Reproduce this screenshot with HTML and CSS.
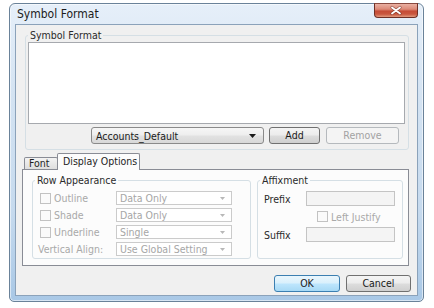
FILE: index.html
```html
<!DOCTYPE html>
<html>
<head>
<meta charset="utf-8">
<link rel="stylesheet" href="styles.css">
</head>
<body>
<div class="window">
  <div class="titlebar">
    <span class="title">Symbol Format</span>
    <div class="close">
      <svg width="42" height="13" viewBox="0 0 42 13">
        <path d="M17 3.5 L25 9.5 M25 3.5 L17 9.5" stroke="#5a2018" stroke-width="3.2" stroke-linecap="round" fill="none" opacity="0.55"/>
        <path d="M17 3.5 L25 9.5 M25 3.5 L17 9.5" stroke="#ffffff" stroke-width="1.8" stroke-linecap="round" fill="none"/>
      </svg>
    </div>
  </div>
  <div class="client">
    <fieldset class="group sym">
      <legend>Symbol Format</legend>
      <div class="listbox"></div>
      <div class="symrow">
        <div class="dropdown"><span>Accounts_Default</span><svg class="darrow" width="7" height="4" viewBox="0 0 7 4"><path d="M0 0 H7 L3.5 4 Z" fill="#1a1a1a"/></svg></div>
        <div class="btn add">Add</div>
        <div class="btn remove">Remove</div>
      </div>
    </fieldset>
    <div class="tabs">
      <div class="tab">Font</div>
      <div class="tab active">Display Options</div>
    </div>
    <div class="panel">
      <fieldset class="group rowapp">
        <legend>Row Appearance</legend>
        <div class="grid">
          <div class="chk"><span class="box"></span>Outline</div>
          <div class="combo"><span>Data Only</span><svg class="carrow" width="5" height="3" viewBox="0 0 5 3"><path d="M0 0 H5 L2.5 3 Z" fill="#b8b8b8"/></svg></div>
          <div class="chk"><span class="box"></span>Shade</div>
          <div class="combo"><span>Data Only</span><svg class="carrow" width="5" height="3" viewBox="0 0 5 3"><path d="M0 0 H5 L2.5 3 Z" fill="#b8b8b8"/></svg></div>
          <div class="chk"><span class="box"></span>Underline</div>
          <div class="combo"><span>Single</span><svg class="carrow" width="5" height="3" viewBox="0 0 5 3"><path d="M0 0 H5 L2.5 3 Z" fill="#b8b8b8"/></svg></div>
          <div class="lbl">Vertical Align:</div>
          <div class="combo"><span>Use Global Setting</span><svg class="carrow" width="5" height="3" viewBox="0 0 5 3"><path d="M0 0 H5 L2.5 3 Z" fill="#b8b8b8"/></svg></div>
        </div>
      </fieldset>
      <fieldset class="group affix">
        <legend>Affixment</legend>
        <div class="frow"><span class="flabel">Prefix</span><div class="input"></div></div>
        <div class="ljrow"><span class="box"></span>Left Justify</div>
        <div class="frow"><span class="flabel">Suffix</span><div class="input"></div></div>
      </fieldset>
    </div>
    <div class="actions">
      <div class="btn ok">OK</div>
      <div class="btn cancel">Cancel</div>
    </div>
  </div>
</div>
</body>
</html>
```
FILE: styles.css
```css
* { box-sizing: border-box; }
html, body { margin: 0; padding: 0; background: #ffffff; }
body {
  font-family: "DejaVu Sans Condensed", "DejaVu Sans", sans-serif;
  font-stretch: condensed;
  font-size: 10.5px;
  color: #1e1e1e;
  white-space: nowrap;
}
.window {
  margin: 3px 0 0 9px;
  width: 415px;
  height: 299px;
  border: 1px solid #6a8299;
  border-radius: 6px 6px 5px 5px;
  background: linear-gradient(to bottom, #e6eff9 0%, #d4e3f2 30%, #c6daee 70%, #a9c8e6 100%);
  box-shadow: inset 0 0 0 1px rgba(255,255,255,0.55);
  padding: 0 5px 5px 5px;
  display: flex;
  flex-direction: column;
}
.titlebar {
  height: 20px;
  display: flex;
  align-items: center;
}
.title {
  padding-left: 2px;
  font-size: 12px;
  color: #1b1b1b;
}
.close {
  margin-left: auto;
  align-self: flex-start;
  margin-top: -1px;
  width: 44px;
  height: 15px;
  border: 1px solid #6e2f25;
  border-top-color: #8a4a40;
  border-radius: 0 0 4px 4px;
  background: linear-gradient(to bottom, #eab0a2 0%, #dc8a78 40%, #c64c36 55%, #c9573f 78%, #e29a7e 100%);
  display: flex;
  align-items: center;
  justify-content: center;
}
.close svg { display: block; }
.client {
  flex: 1;
  border: 1px solid #8ba2ba;
  background: #f0f0f0;
  display: flex;
  flex-direction: column;
}
fieldset.group {
  margin: 0;
  border: 1px solid #d5dfe5;
  border-radius: 3px;
  min-width: 0;
}
fieldset.group legend {
  padding: 0 2px;
  line-height: 13px;
  height: 13px;
  color: #2a2a2a;
}
.sym {
  margin: 4px 8px 0 9px !important;
  padding: 0 3px 5px 2px;
}
.listbox {
  height: 82px;
  background: #ffffff;
  border: 1px solid #a6a9ae;
}
.symrow {
  margin-top: 3px;
  display: flex;
  justify-content: flex-end;
  padding-right: 6px;
  height: 17px;
}
.btn {
  height: 17px;
  border: 1px solid #707070;
  border-radius: 3px;
  background: linear-gradient(to bottom, #f4f4f4 0%, #ececec 48%, #dddddd 52%, #cfcfcf 100%);
  display: flex;
  align-items: center;
  justify-content: center;
  color: #1a1a1a;
  line-height: 1;
}
.dropdown {
  width: 173px;
  height: 17px;
  border: 1px solid #8a8a8a;
  border-radius: 3px;
  background: linear-gradient(to bottom, #f6f6f6 0%, #eeeeee 48%, #e2e2e2 52%, #d8d8d8 100%);
  display: flex;
  align-items: center;
  padding: 0 6px 0 4px;
  color: #1a1a1a;
}
.dropdown span { flex: 1; }
.darrow { display: block; margin-right: 1px; }
.add { width: 51px; margin-left: 5px; }
.remove {
  width: 73px;
  margin-left: 6px;
  border-color: #b5b9bd;
  background: #f4f4f4;
  color: #a2a2a2;
}
.tabs {
  margin: 3px 0 0 8px;
  height: 16px;
  display: flex;
  align-items: flex-end;
  position: relative;
  z-index: 1;
}
.tab {
  height: 12px;
  width: 34px;
  border: 1px solid #898c95;
  border-bottom: none;
  background: linear-gradient(to bottom, #f3f3f3 0%, #e8e8e8 50%, #dedede 100%);
  border-radius: 2px 2px 0 0;
  padding-left: 4px;
  line-height: 11px;
  color: #1e1e1e;
  overflow: hidden;
}
.tab.active {
  height: 17px;
  width: 83px;
  margin-left: -1px;
  margin-bottom: -1px;
  background: #fcfcfc;
  padding-left: 5px;
  line-height: 14px;
}
.panel {
  margin: 0 8px 0 6px;
  border: 1px solid #898c95;
  background: #fcfcfc;
  padding: 4px 5px 6px 9px;
  display: flex;
  align-items: flex-start;
}
.rowapp {
  width: 219px;
  padding: 0 0 2px 2px;
}
.affix {
  width: 146px;
  margin-left: 6px !important;
  padding: 0 0 2px 2px;
  align-self: stretch;
}
.grid {
  margin: 4px 0 0 3px;
  display: grid;
  grid-template-columns: 78px 116px;
  grid-auto-rows: 14px;
  row-gap: 3px;
  align-items: center;
}
.chk, .ljrow {
  display: flex;
  align-items: center;
  color: #a9a9a9;
}
.lbl { color: #a9a9a9; }
.box {
  width: 11px;
  height: 11px;
  border: 1px solid #c2c2c2;
  background: #fafafa;
  margin: 0 3px 0 2px;
  flex: none;
}
.combo {
  height: 14px;
  border: 1px solid #cbcbcb;
  background: #ffffff;
  display: flex;
  align-items: center;
  padding: 0 6px 0 3px;
  color: #a6a6a6;
}
.combo span { flex: 1; }
.carrow { display: block; }
.frow {
  display: flex;
  align-items: center;
  padding-left: 4px;
  height: 15px;
  margin-top: 4px;
  color: #2a2a2a;
}
.frow + .ljrow + .frow { margin-top: 5px; }
.flabel { width: 42px; }
.input {
  width: 89px;
  height: 15px;
  border: 1px solid #c4c4c4;
  background: #f4f4f4;
}
.ljrow {
  margin: 5px 0 0 55px;
  height: 11px;
}
.actions {
  margin-top: 9px;
  display: flex;
  justify-content: flex-end;
  padding-right: 6px;
}
.ok {
  width: 66px;
  border-color: #3c7fb1;
  background: linear-gradient(to bottom, #eaf6fd 0%, #d9f0fc 48%, #bee6fd 52%, #a7d9f5 100%);
}
.cancel { width: 65px; margin-left: 6px; }
```
